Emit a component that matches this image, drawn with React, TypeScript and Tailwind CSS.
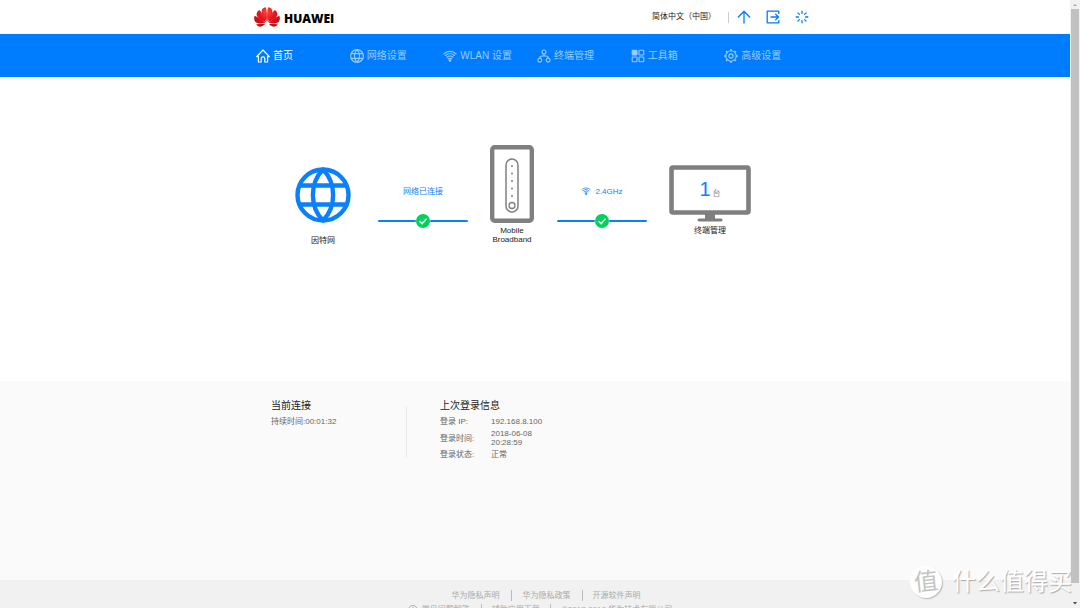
import type { ReactNode } from "react";

type IconProps = { className?: string };

const svgBase = {
  fill: "none",
  stroke: "currentColor",
  strokeLinecap: "round",
  strokeLinejoin: "round",
} as const;

function HuaweiLogo() {
  return (
    <svg viewBox="0 0 26 20" className="h-5 w-[26px]" aria-hidden="true">
      <defs>
        <radialGradient id="petal" gradientUnits="userSpaceOnUse" cx="13" cy="5" r="16">
          <stop offset="0" stopColor="#fb4a3c" />
          <stop offset="0.5" stopColor="#e8141c" />
          <stop offset="1" stopColor="#b80d12" />
        </radialGradient>
      </defs>
      <g fill="url(#petal)">
        <path d="M12.6 14.6C8.8 9.6 7.2 6 7.8 3.2C8.4 1 10.4.3 11.8.3C13 3 13.3 8 12.6 14.6Z" />
        <path d="M13.4 14.6C17.2 9.600 18.8 6 18.2 3.2C17.6 1 15.6.3 14.2.3C13 3 12.700 8 13.4 14.6Z" />
        <path d="M11.9 15.3C6.800 13.200 3 10.800 2.600 7.600C2.400 5.400 3.900 3.600 5.300 2.900C8.600 6 11.200 10.600 11.900 15.300Z" />
        <path d="M14.100 15.300C19.200 13.200 23 10.800 23.400 7.600C23.600 5.400 22.100 3.600 20.700 2.900C17.400 6 14.800 10.600 14.100 15.300Z" />
        <path d="M11.400 16.100C6.800 16.700 2.900 16.800 1.100 14.400C-.1 12.600 0 10.400.6 8.700C4.800 10.400 9 13.100 11.400 16.100Z" />
        <path d="M14.600 16.100C19.200 16.700 23.100 16.800 24.900 14.400C26.100 12.600 26 10.400 25.400 8.700C21.200 10.400 17 13.100 14.600 16.100Z" />
        <path d="M11.100 16.900C9 18.900 7.200 19.900 5.200 19.600C3.900 19.300 2.900 18.300 2.200 17.200C5.400 17.100 8.400 16.900 11.100 16.900Z" />
        <path d="M14.900 16.900C17 18.900 18.800 19.900 20.800 19.600C22.100 19.300 23.100 18.300 23.800 17.200C20.600 17.100 17.600 16.900 14.900 16.900Z" />
      </g>
    </svg>
  );
}

function HomeIcon({ className }: IconProps) {
  return (
    <svg viewBox="0 0 14 14" className={className} {...svgBase} strokeWidth="1.2">
      <path d="M.7 7.6L7 1L13.3 7.6H11.6V13H8.8V9.6C8.8 7.4 5.2 7.4 5.2 9.6V13H2.4V7.6Z" />
    </svg>
  );
}

function GlobeIcon({ className }: IconProps) {
  return (
    <svg viewBox="0 0 56 56" className={className} {...svgBase} strokeWidth="4.4">
      <circle cx="28" cy="28" r="25.5" />
      <path d="M28 2.5C14.500 16 14.500 40 28 53.500M28 2.500C41.500 16 41.500 40 28 53.500M5 18.500H51M5 37.500H51" />
    </svg>
  );
}

function WifiIcon({ className }: IconProps) {
  return (
    <svg viewBox="0 0 14 12" className={className} {...svgBase} strokeWidth="1.1">
      <path d="M.9 3.800C4.400.5 9.600.5 13.100 3.800M2.400 5.500C5.100 3.100 8.900 3.100 11.600 5.500M3.900 7.200C5.800 5.700 8.200 5.700 10.100 7.200M5.300 8.800C6.400 8.100 7.600 8.100 8.700 8.800" />
      <circle cx="7" cy="10.500" r=".8" fill="currentColor" />
    </svg>
  );
}

function DevicesIcon({ className }: IconProps) {
  return (
    <svg viewBox="0 0 14 14" className={className} {...svgBase} strokeWidth="1.1">
      <circle cx="7" cy="3" r="2" />
      <circle cx="2.8" cy="11.2" r="1.900" />
      <circle cx="11.2" cy="11.2" r="1.900" />
      <path d="M7 5V7M2.800 9.200C2.800 7.600 3.600 7 5 7H9C10.400 7 11.200 7.600 11.200 9.200" />
    </svg>
  );
}

function ToolboxIcon({ className }: IconProps) {
  return (
    <svg viewBox="0 0 14 14" className={className} {...svgBase} strokeWidth="1.1">
      <rect x="1.2" y="1.2" width="4.8" height="4.8" rx=".8" fill="currentColor" />
      <rect x="8" y="1.2" width="4.8" height="4.8" rx=".8" />
      <rect x="1.2" y="8" width="4.8" height="4.8" rx=".8" />
      <rect x="8" y="8" width="4.8" height="4.8" rx=".8" />
    </svg>
  );
}

function GearIcon({ className }: IconProps) {
  return (
    <svg viewBox="0 0 14 14" className={className} {...svgBase} strokeWidth="1.1">
      <circle cx="7" cy="7" r="5.200" />
      <circle cx="7" cy="7" r="2.100" />
      <path
        d="M7 .7V1.500M7 12.500V13.300M.7 7H1.500M12.500 7H13.300M2.500 2.500L3 3M11 11L11.500 11.500M2.500 11.500L3 11M11 3L11.500 2.500"
        strokeWidth="1.6"
      />
    </svg>
  );
}

function UpdateIcon({ className }: IconProps) {
  return (
    <svg viewBox="0 0 14 14" className={className} {...svgBase} strokeWidth="1.3">
      <path d="M7 13V1.300M1.300 7L7 1.300L12.700 7" />
    </svg>
  );
}

function LogoutIcon({ className }: IconProps) {
  return (
    <svg viewBox="0 0 14 14" className={className} {...svgBase} strokeWidth="1.3">
      <path d="M12.800 3.400V1.200H1.200V12.800H12.800V10.600M5 7H12.500M9.700 4.200L12.500 7L9.700 9.800" />
    </svg>
  );
}

function LoadingIcon({ className }: IconProps) {
  return (
    <svg viewBox="0 0 14 14" className={className} {...svgBase} strokeWidth="1.3">
      <path d="M7 1.200V3.400M7 10.600V12.800M1.200 7H3.400M10.600 7H12.800M2.900 2.900L4.400 4.400M9.600 9.600L11.100 11.100M2.900 11.100L4.400 9.600M9.600 4.400L11.100 2.900" />
    </svg>
  );
}

function RouterIcon() {
  return (
    <svg viewBox="0 0 44 78" className="h-[78px] w-11" fill="none" stroke="#7f7f7f" aria-hidden="true">
      <rect x="2.2" y="2.2" width="39.6" height="73.6" rx="2.5" strokeWidth="4.4" />
      <rect x="16" y="14" width="12" height="53" rx="6" strokeWidth="1.5" />
      <circle cx="22" cy="60.5" r="3" strokeWidth="1.3" />
      <g fill="#7f7f7f" stroke="none">
        <circle cx="22" cy="21" r="1" />
        <circle cx="22" cy="28.5" r="1" />
        <circle cx="22" cy="36" r="1" />
        <circle cx="22" cy="43.5" r="1" />
        <circle cx="22" cy="51" r="1" />
      </g>
    </svg>
  );
}

function MonitorFrame() {
  return (
    <svg viewBox="0 0 82 58" className="h-[58px] w-[82px]" aria-hidden="true">
      <rect x="2.5" y="2.5" width="77" height="45" rx="1.5" fill="white" stroke="#7f7f7f" strokeWidth="4.6" />
      <path d="M36 49H46V53.500H52C54 53.500 54 56.500 52 56.500H30C28 56.500 28 53.500 30 53.500H36Z" fill="#7f7f7f" />
    </svg>
  );
}

const navItems = [
  { label: "首页", Icon: HomeIcon, active: true },
  { label: "网络设置", Icon: GlobeIcon, active: false },
  { label: "WLAN 设置", Icon: WifiIcon, active: false },
  { label: "终端管理", Icon: DevicesIcon, active: false },
  { label: "工具箱", Icon: ToolboxIcon, active: false },
  { label: "高级设置", Icon: GearIcon, active: false },
];

function Header() {
  return (
    <header className="mx-auto flex h-[34px] w-full max-w-[562px] items-center justify-between">
      <a href="#home" className="flex items-center gap-1">
        <HuaweiLogo />
        <span className="pt-1 font-['Open_Sans',sans-serif] text-[12px] leading-4 font-extrabold text-black">
          HUAWEI
        </span>
      </a>
      <div className="flex items-center pr-[7px] text-[#007dff]">
        <button type="button" className="text-[8px] text-[#222]">
          简体中文（中国）
        </button>
        <span className="mr-2 ml-3 h-[11px] w-px bg-[#ccc]" />
        <div className="flex gap-[15px]">
          <button type="button" aria-label="更新">
            <UpdateIcon className="size-3.5" />
          </button>
          <button type="button" aria-label="退出">
            <LogoutIcon className="size-3.5" />
          </button>
          <button type="button" aria-label="加载">
            <LoadingIcon className="size-3.5" />
          </button>
        </div>
      </div>
    </header>
  );
}

function Nav() {
  return (
    <nav className="bg-[#007dff]">
      <div className="mx-auto grid h-[43px] w-full max-w-[562px] grid-cols-6">
        {navItems.map(({ label, Icon, active }) => (
          <a
            key={label}
            href="#"
            className={`flex items-center gap-[3px] pl-0.5 text-[10px] whitespace-nowrap ${
              active ? "text-white" : "text-[#99cbff]"
            }`}
          >
            <Icon className="size-3.5 shrink-0" />
            {label}
          </a>
        ))}
      </div>
    </nav>
  );
}

function Connection({ children }: { children: ReactNode }) {
  return (
    <div className="flex w-[90px] flex-col items-center text-[8px] text-[#0a80ff]">
      <div className="flex h-3 items-center gap-1">{children}</div>
      <div className="mt-[17px] flex w-full items-center">
        <span className="h-0.5 flex-1 rounded-full bg-current" />
        <svg viewBox="0 0 14 14" className="size-3.5" aria-hidden="true">
          <circle cx="7" cy="7" r="7" fill="#00d35c" />
          <path d="M3.600 7.200L6.100 9.600L10.500 4.800" fill="none" stroke="white" strokeWidth="1.5" />
        </svg>
        <span className="h-0.5 flex-1 rounded-full bg-current" />
      </div>
    </div>
  );
}

function Topology() {
  return (
    <section className="mx-auto flex h-[304px] w-full max-w-[562px] items-start pt-[68px] pl-[41px] text-center text-[8px] leading-[9px] text-[#222]">
      <a href="#internet" className="mt-[22px] flex w-14 flex-col items-center">
        <GlobeIcon className="size-14 text-[#0a80ff]" />
        <span className="mt-[13px]">因特网</span>
      </a>
      <div className="mt-10 ml-[27px]">
        <Connection>网络已连接</Connection>
      </div>
      <a href="#router" className="ml-[22px] flex w-11 flex-col items-center">
        <RouterIcon />
        <span className="mt-[3px]">Mobile Broadband</span>
      </a>
      <div className="mt-10 ml-[23px]">
        <Connection>
          <WifiIcon className="h-2 w-2.5" />
          2.4GHz
        </Connection>
      </div>
      <a href="#devices" className="mt-5 ml-[22px] flex flex-col items-center">
        <span className="relative">
          <MonitorFrame />
          <span className="absolute inset-x-0 top-0 flex h-[50px] items-baseline justify-center gap-0.5 pt-[14px]">
            <span className="text-[20px] leading-5 text-[#0a80ff]">1</span>
            <span className="text-[#888]">台</span>
          </span>
        </span>
        <span className="mt-[3px]">终端管理</span>
      </a>
    </section>
  );
}

const loginInfo = [
  { label: "登录 IP:", value: "192.168.8.100" },
  { label: "登录时间:", value: "2018-06-08 20:28:59" },
  { label: "登录状态:", value: "正常" },
];

function Status() {
  return (
    <section className="h-[199px] bg-[#fafafa] text-[8px] leading-[9px] text-[#666]">
      <div className="mx-auto flex w-full max-w-[562px] pt-[18px] pl-[17px]">
        <div className="w-[135px]">
          <h2 className="text-[10px] leading-[14px] text-[#222]">当前连接</h2>
          <p className="mt-1">持续时间:00:01:32</p>
        </div>
        <div className="mt-2 h-[50px] w-px bg-[#e8e8e8]" />
        <div className="pl-[33px]">
          <h2 className="text-[10px] leading-[14px] text-[#222]">上次登录信息</h2>
          <table className="mt-1 text-left">
            <tbody>
              {loginInfo.map(({ label, value }) => (
                <tr key={label}>
                  <th scope="row" className="w-[51px] pb-[3px] font-normal">
                    {label}
                  </th>
                  <td className="w-[54px] pb-[3px]">{value}</td>
                </tr>
              ))}
            </tbody>
          </table>
        </div>
      </div>
    </section>
  );
}

function Footer() {
  return (
    <footer className="bg-[#f1f1f1] pt-2.5 pb-8 text-[8px] leading-[11px] text-[#aaa]">
      <div className="flex justify-center pl-[22px]">
        <a href="#statement" className="pr-[11px]">
          华为隐私声明
        </a>
        <a href="#policy" className="border-l border-[#bbb] px-[11px]">
          华为隐私政策
        </a>
        <a href="#license" className="border-l border-[#bbb] pl-2.5">
          开源软件声明
        </a>
      </div>
      <div className="mt-[3px] flex justify-center pl-2.5">
        <a href="#faq" className="flex items-center gap-1 pr-[11px]">
          <svg viewBox="0 0 10 10" className="size-2.5" {...svgBase} strokeWidth=".9">
            <circle cx="5" cy="5" r="4.5" />
            <path d="M3.600 4C3.600 2.300 6.400 2.300 6.400 4C6.400 5 5 5 5 6.200M5 7.700V7.800" />
          </svg>
          常见问题解答
        </a>
        <a href="#download" className="border-l border-[#bbb] px-2.5">
          辅助应用下载
        </a>
        <span className="border-l border-[#bbb] pl-[11px]">©2017-2018 华为技术有限公司</span>
      </div>
    </footer>
  );
}

function Scrollbar() {
  return (
    <div className="flex w-2.5 shrink-0 flex-col items-center bg-[#f1f1f1]" aria-hidden="true">
      <svg viewBox="0 0 10 9" className="h-[9px] w-2.5">
        <path d="M3 6L5 4L7 6Z" fill="#a3a3a3" />
      </svg>
      <div className="w-2 flex-1 bg-[#c1c1c1]" />
      <svg viewBox="0 0 10 25" className="h-[25px] w-2.5">
        <path d="M3 19L5 21.500L7 19Z" fill="#444" />
      </svg>
    </div>
  );
}

function Watermark() {
  return (
    <div className="pointer-events-none absolute right-2 bottom-[10px] flex items-center gap-2.5 text-white">
      <span className="flex size-8 items-center justify-center rounded-full bg-white text-[24px] leading-8 text-[#c4c4c4] shadow-[1px_1px_1px_#bbb]">
        <span className="-rotate-6">值</span>
      </span>
      <span className="text-[24px] leading-8 [text-shadow:1px_1px_1px_#aaa]">什么值得买</span>
    </div>
  );
}

export default function App() {
  return (
    <div className="relative flex h-screen overflow-hidden bg-white font-['Liberation_Sans','Noto_Sans_CJK_SC',sans-serif]">
      <div className="min-w-0 flex-1 overflow-hidden">
        <Header />
        <Nav />
        <main>
          <Topology />
          <Status />
        </main>
        <Footer />
      </div>
      <Scrollbar />
      <Watermark />
    </div>
  );
}
